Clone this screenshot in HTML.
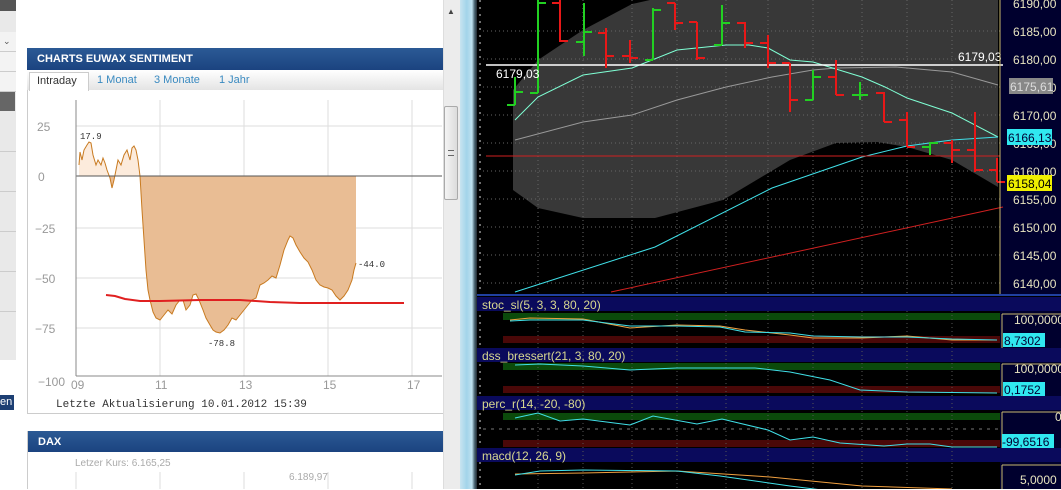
<!DOCTYPE html>
<html><head><meta charset="utf-8"><style>
*{margin:0;padding:0;box-sizing:border-box}
body{width:1061px;height:489px;overflow:hidden;position:relative;background:#fff;font-family:"Liberation Sans",sans-serif}
.a{position:absolute}
.mono{font-family:"Liberation Mono",monospace}
</style></head><body>
<!-- left sidebar -->
<div class="a" style="left:0;top:0;width:16px;height:360px;background:#e9e9e9"></div>
<div class="a" style="left:0;top:0;width:16px;height:11px;background:#555"></div>
<div class="a" style="left:0;top:32px;width:16px;height:20px;background:#f3f3f3;border-bottom:1px solid #ccc"></div>
<div class="a" style="left:0;top:52px;width:16px;height:20px;background:#f3f3f3;border-bottom:1px solid #ccc"></div>
<div class="a" style="left:0;top:72px;width:16px;height:20px;background:#f3f3f3;border-bottom:1px solid #ccc"></div>
<div class="a" style="left:0;top:92px;width:15px;height:19px;background:#666"></div>
<div class="a" style="left:0;top:132px;width:16px;height:20px;border-bottom:1px solid #ccc"></div>
<div class="a" style="left:0;top:172px;width:16px;height:20px;border-bottom:1px solid #ccc"></div>
<div class="a" style="left:0;top:212px;width:16px;height:20px;border-bottom:1px solid #ccc"></div>
<div class="a" style="left:0;top:252px;width:16px;height:20px;border-bottom:1px solid #ccc"></div>
<div class="a" style="left:0;top:292px;width:16px;height:20px;border-bottom:1px solid #ccc"></div>
<div class="a" style="left:0;top:360px;width:16px;height:130px;background:#fff"></div>
<div class="a" style="left:0;top:395px;width:14px;height:15px;background:#1d3f73;color:#fff;font-size:11px;line-height:15px">en</div>
<div class="a" style="left:3px;top:36px;font-size:9px;color:#555">⌄</div>

<!-- sentiment panel -->
<div class="a" style="left:27px;top:48px;width:416px;height:366px;border:1px solid #ccc;border-right:none"></div>
<div class="a" style="left:27px;top:48px;width:416px;height:22px;background:linear-gradient(#2b5a95,#1b4380);color:#fff;font-weight:bold;font-size:11px;line-height:23px;padding-left:10px">CHARTS EUWAX SENTIMENT</div>
<div class="a" style="left:27px;top:70px;width:416px;height:20px;background:linear-gradient(#fff,#e4e4e4)"></div>
<div class="a" style="left:29px;top:72px;width:60px;height:19px;background:#fff;border:1px solid #ccc;border-bottom:none;font-size:11px;line-height:17px;padding-left:7px;color:#333">Intraday</div>
<div class="a" style="left:97px;top:74px;font-size:11px;color:#3a8ac0">1 Monat</div>
<div class="a" style="left:154px;top:74px;font-size:11px;color:#3a8ac0">3 Monate</div>
<div class="a" style="left:219px;top:74px;font-size:11px;color:#3a8ac0">1 Jahr</div>

<svg class="a" style="left:0;top:0" width="443" height="489">
<defs>
<clipPath id="up"><rect x="0" y="0" width="443" height="176"/></clipPath>
<clipPath id="dn"><rect x="0" y="176" width="443" height="300"/></clipPath>
</defs>
<g stroke="#ddd" stroke-width="1">
<line x1="160" y1="100" x2="160" y2="376"/><line x1="244" y1="100" x2="244" y2="376"/><line x1="328" y1="100" x2="328" y2="376"/><line x1="412" y1="100" x2="412" y2="376"/>
<line x1="76" y1="126" x2="442" y2="126"/><line x1="76" y1="228" x2="442" y2="228"/><line x1="76" y1="278" x2="442" y2="278"/><line x1="76" y1="328" x2="442" y2="328"/>
</g>
<polygon clip-path="url(#up)" fill="#fcebdc" points="79,176 79,165 80,152 82,160 84,150 87,145 89,142 91,143 93,155 96,165 98,160 101,165 103,158 105,163 107,170 110,178 112,188 114,180 116,170 118,160 121,165 124,155 127,150 130,160 132,148 134,146 136,150 138,160 140,176"/>
<polygon clip-path="url(#dn)" fill="#e9bd94" points="79,176 79,165 80,152 82,160 84,150 87,145 89,142 91,143 93,155 96,165 98,160 101,165 103,158 105,163 107,170 110,178 112,188 114,180 116,170 118,160 121,165 124,155 127,150 130,160 132,148 134,146 136,150 138,160 140,176 142,210 144,240 146,270 148,290 150,300 153,312 156,318 160,320 164,315 168,310 172,314 176,305 180,300 183,300 186,310 190,305 193,295 196,294 199,300 203,310 206,318 210,325 213,330 216,332 220,333 224,330 228,325 232,318 236,320 240,315 244,310 248,305 252,300 256,298 260,285 264,283 268,280 272,276 276,278 280,265 284,250 288,240 290,236 293,238 296,245 300,252 304,258 308,262 312,270 316,280 320,285 324,287 328,288 332,290 336,296 340,300 344,296 348,290 352,280 354,270 356,263 356,176"/>
<polyline fill="none" stroke="#c87a20" stroke-width="1" points="79,165 80,152 82,160 84,150 87,145 89,142 91,143 93,155 96,165 98,160 101,165 103,158 105,163 107,170 110,178 112,188 114,180 116,170 118,160 121,165 124,155 127,150 130,160 132,148 134,146 136,150 138,160 140,176 142,210 144,240 146,270 148,290 150,300 153,312 156,318 160,320 164,315 168,310 172,314 176,305 180,300 183,300 186,310 190,305 193,295 196,294 199,300 203,310 206,318 210,325 213,330 216,332 220,333 224,330 228,325 232,318 236,320 240,315 244,310 248,305 252,300 256,298 260,285 264,283 268,280 272,276 276,278 280,265 284,250 288,240 290,236 293,238 296,245 300,252 304,258 308,262 312,270 316,280 320,285 324,287 328,288 332,290 336,296 340,300 344,296 348,290 352,280 354,270 356,263"/>
<line x1="76" y1="176" x2="442" y2="176" stroke="#555"/>
<line x1="76" y1="100" x2="76" y2="376" stroke="#888"/>
<line x1="76" y1="376" x2="442" y2="376" stroke="#888"/>
<polyline fill="none" stroke="#e02020" stroke-width="2" points="106,295 115,296 125,299 140,301 160,301 200,300 240,300 270,302 300,303 330,303 404,303"/>
<g font-family="Liberation Sans" font-size="12" fill="#999">
<text x="37" y="131">25</text><text x="38" y="181">0</text><text x="35" y="233">−25</text><text x="35" y="283">−50</text><text x="35" y="333">−75</text><text x="36" y="135" display="none"></text><text x="38" y="386">−100</text>
<text x="71" y="389">09</text><text x="155" y="389">11</text><text x="239" y="389">13</text><text x="323" y="389">15</text><text x="407" y="389">17</text>
</g>
<g font-family="Liberation Mono" font-size="9" fill="#333">
<text x="80" y="139">17.9</text><text x="208" y="346">-78.8</text><text x="358" y="267">-44.0</text>
</g>
<text x="56" y="407" font-family="Liberation Mono" font-size="11" fill="#333">Letzte Aktualisierung 10.01.2012 15:39</text>
<g stroke="#ddd"><line x1="76" y1="472" x2="76" y2="489"/><line x1="160" y1="472" x2="160" y2="489"/><line x1="244" y1="472" x2="244" y2="489"/><line x1="328" y1="472" x2="328" y2="489"/><line x1="412" y1="472" x2="412" y2="489"/></g>
</svg>
<div class="a" style="left:27px;top:431px;width:416px;height:58px;border-left:1px solid #ccc"></div>
<div class="a" style="left:28px;top:431px;width:415px;height:21px;background:linear-gradient(#2b5a95,#1b4380);color:#fff;font-weight:bold;font-size:11px;line-height:22px;padding-left:10px">DAX</div>
<div class="a" style="left:75px;top:458px;font-size:10px;color:#aaa">Letzer Kurs: 6.165,25</div>
<div class="a" style="left:289px;top:472px;font-size:10px;color:#aaa">6.189,97</div>

<!-- scrollbar -->
<div class="a" style="left:443px;top:0;width:17px;height:489px;background:#ececec;border-left:1px solid #ddd"></div>
<div class="a" style="left:447px;top:7px;font-size:8px;color:#444">▲</div>
<div class="a" style="left:444px;top:106px;width:14px;height:94px;background:linear-gradient(90deg,#f4f4f4,#dcdcdc);border:1px solid #aaa;border-radius:2px"></div>
<div class="a" style="left:448px;top:150px;width:6px;height:6px;border-top:1px solid #666;border-bottom:1px solid #666"></div>
<!-- frame -->
<div class="a" style="left:460px;top:0;width:17px;height:489px;background:linear-gradient(90deg,#c8e4f0,#a2d4ea 40%,#bfe1ef 70%,#4e6a78 85%,#202830)"></div>

<!-- trading chart -->
<svg class="a" style="left:477px;top:0" width="584" height="489" viewBox="477 0 584 489">
<rect x="477" y="0" width="584" height="489" fill="#000"/>
<rect x="1000" y="0" width="61" height="295" fill="#00002e"/>
<polygon fill="#383838" points="513,90 538,60 583,30 632,4 650,0 998,0 998,187 952,160 907,147 877,142 836,143 790,160 723,200 655,218 583,218 538,208 513,190"/>
<g stroke="#666" stroke-dasharray="1,3">
<line x1="538" y1="0" x2="538" y2="295"/><line x1="583" y1="0" x2="583" y2="295"/><line x1="632" y1="0" x2="632" y2="295"/><line x1="677" y1="0" x2="677" y2="295"/><line x1="726" y1="0" x2="726" y2="295"/><line x1="768" y1="0" x2="768" y2="295"/><line x1="813" y1="0" x2="813" y2="295"/><line x1="862" y1="0" x2="862" y2="295"/><line x1="907" y1="0" x2="907" y2="295"/><line x1="952" y1="0" x2="952" y2="295"/>
<line x1="483" y1="31" x2="1000" y2="31"/><line x1="483" y1="59" x2="1000" y2="59"/><line x1="483" y1="87" x2="1000" y2="87"/><line x1="483" y1="115" x2="1000" y2="115"/><line x1="483" y1="143" x2="1000" y2="143"/><line x1="483" y1="171" x2="1000" y2="171"/><line x1="483" y1="199" x2="1000" y2="199"/><line x1="483" y1="227" x2="1000" y2="227"/><line x1="483" y1="255" x2="1000" y2="255"/><line x1="483" y1="283" x2="1000" y2="283"/>
</g>
<line x1="480" y1="0" x2="480" y2="489" stroke="#ddd" stroke-dasharray="2,5"/>
<polyline fill="none" stroke="#999" points="515,140 583,122 632,115 677,100 726,87 772,77 813,70 836,68 896,67 952,72 998,85"/>
<polyline fill="none" stroke="#7fffd4" points="515,120 538,97 583,75 632,68 677,50 726,45 749,45 768,48 790,60 813,62 862,77 885,87 907,98 952,113 998,137"/>
<polyline fill="none" stroke="#40e0e8" points="515,292 655,247 772,188 862,157 907,146 952,140 998,137"/>
<line x1="611" y1="292" x2="1003" y2="207" stroke="#d02020"/>
<line x1="486" y1="156" x2="1000" y2="156" stroke="#d02020"/>
<line x1="486" y1="65" x2="1003" y2="65" stroke="#fff" stroke-width="1.5"/>
<g stroke-width="2" fill="none">
<g stroke="#22d022">
<path d="M515 77V105M507 105H515M515 92H523"/>
<path d="M538 0V93M530 93H538M538 3H546"/>
<path d="M584 3V56M576 42H584M584 32H592"/>
<path d="M653 8V60M645 60H653M653 10H661"/>
<path d="M722 5V45M714 45H722M722 23H730"/>
<path d="M813 70V100M805 100H813M813 77H821"/>
<path d="M860 82V100M852 95H868"/>
<path d="M930 142V155M922 147H930M930 143H938"/>
</g>
<g stroke="#e81818">
<path d="M560 0V42M552 3H560M560 41H568"/>
<path d="M606 28V68M598 33H606M606 56H614"/>
<path d="M630 40V63M622 56H630M630 58H638"/>
<path d="M675 3V30M667 3H675M675 23H683"/>
<path d="M697 22V60M689 22H697M697 58H705"/>
<path d="M745 22V48M737 23H745M745 43H753"/>
<path d="M768 35V68M760 43H768M768 63H776"/>
<path d="M790 63V112M782 63H790M790 100H798"/>
<path d="M836 60V95M828 77H836M836 95H844"/>
<path d="M884 92V122M876 93H884M884 122H892"/>
<path d="M907 112V147M899 120H907M907 147H915"/>
<path d="M952 140V163M944 143H952M952 150H960"/>
<path d="M975 112V172M967 150H975M975 170H983"/>
<path d="M997 158V182M989 170H997M997 182H1005"/>
</g>
</g>
<g font-family="Liberation Sans" font-size="12" fill="#fff">
<text x="496" y="78">6179,03</text><text x="958" y="61">6179,03</text>
</g>
<line x1="1000" y1="0" x2="1000" y2="295" stroke="#c8b870"/>
<g font-family="Liberation Sans" font-size="12" fill="#e8e4c0">
<text x="1013" y="8">6190,00</text><text x="1013" y="36">6185,00</text><text x="1013" y="64">6180,00</text><text x="1013" y="92">6175,00</text><text x="1013" y="120">6170,00</text><text x="1013" y="148">6165,00</text><text x="1013" y="176">6160,00</text><text x="1013" y="204">6155,00</text><text x="1013" y="232">6150,00</text><text x="1013" y="260">6145,00</text><text x="1013" y="288">6140,00</text>
</g>
<rect x="1009" y="78" width="44" height="16" fill="#888"/><text x="1010" y="91" font-family="Liberation Sans" font-size="12" fill="#ddd">6175,61</text>
<rect x="1007" y="129" width="45" height="16" fill="#30e8f0"/><text x="1008" y="142" font-family="Liberation Sans" font-size="12" fill="#003">6166,13</text>
<rect x="1007" y="175" width="45" height="16" fill="#f0f000"/><text x="1008" y="188" font-family="Liberation Sans" font-size="12" fill="#000">6158,04</text>
<line x1="477" y1="295" x2="1061" y2="295" stroke="#2040a0" stroke-width="2"/>

<!-- indicator panels -->
<g>
<rect x="477" y="297" width="584" height="14" fill="#0a0a5c"/>
<rect x="477" y="348" width="584" height="14" fill="#0a0a5c"/>
<rect x="477" y="396" width="584" height="14" fill="#0a0a5c"/>
<rect x="477" y="448" width="584" height="14" fill="#0a0a5c"/>
<rect x="1000" y="311" width="61" height="37" fill="#00002e"/>
<rect x="1000" y="362" width="61" height="34" fill="#00002e"/>
<rect x="1000" y="410" width="61" height="38" fill="#00002e"/>
<rect x="1000" y="462" width="61" height="27" fill="#00002e"/>
<rect x="503" y="313" width="497" height="7" fill="#0b4a0b"/><rect x="503" y="336" width="497" height="7" fill="#4a0808"/>
<rect x="503" y="363" width="497" height="7" fill="#0b4a0b"/><rect x="503" y="386" width="497" height="7" fill="#4a0808"/>
<rect x="503" y="413" width="497" height="7" fill="#0b4a0b"/><rect x="503" y="440" width="497" height="7" fill="#4a0808"/>
<line x1="483" y1="429" x2="1000" y2="429" stroke="#777" stroke-dasharray="3,5"/>
<g stroke="#555" stroke-dasharray="1,3">
<line x1="538" y1="311" x2="538" y2="489"/><line x1="583" y1="311" x2="583" y2="489"/><line x1="632" y1="311" x2="632" y2="489"/><line x1="677" y1="311" x2="677" y2="489"/><line x1="726" y1="311" x2="726" y2="489"/><line x1="768" y1="311" x2="768" y2="489"/><line x1="813" y1="311" x2="813" y2="489"/><line x1="862" y1="311" x2="862" y2="489"/><line x1="907" y1="311" x2="907" y2="489"/><line x1="952" y1="311" x2="952" y2="489"/>
</g>
<g font-family="Liberation Sans" font-size="12" fill="#d8d890">
<text x="482" y="309">stoc_sl(5, 3, 3, 80, 20)</text>
<text x="482" y="360">dss_bressert(21, 3, 80, 20)</text>
<text x="482" y="408">perc_r(14, -20, -80)</text>
<text x="482" y="460">macd(12, 26, 9)</text>
</g>
<polyline fill="none" stroke="#f0a040" points="510,320 530,318 583,319 630,328 677,325 720,326 745,330 790,335 813,338 862,338 907,336 952,340 997,340"/>
<polyline fill="none" stroke="#40e0e8" points="510,321 530,320 583,320 630,326 677,326 720,327 745,332 790,333 813,336 862,337 907,337 952,339 997,340"/>
<polyline fill="none" stroke="#40e0e8" points="515,365 540,364 583,366 630,370 677,368 755,368 790,372 830,380 860,390 907,392 997,393"/>
<polyline fill="none" stroke="#40e0e8" points="515,418 538,413 560,421 583,419 630,425 653,416 697,424 722,419 768,430 790,440 813,437 840,443 884,446 907,444 930,444 952,447 997,447"/>
<polyline fill="none" stroke="#f0a040" points="515,474 583,473 677,471 770,477 862,486 952,489"/>
<polyline fill="none" stroke="#40e0e8" points="515,475 540,471 583,470 677,471 720,476 790,486 862,495"/>
<g fill="none" stroke="#c8b870">
<path d="M1002 314H1061M1002 314V348"/><path d="M1002 364H1061M1002 364V396"/><path d="M1002 412H1061M1002 412V448"/><path d="M1002 465H1061M1002 465V489"/>
</g>
<g font-family="Liberation Sans" font-size="12" fill="#e8e4c0">
<text x="1014" y="324">100,0000</text><text x="1014" y="373">100,0000</text><text x="1055" y="421">0</text><text x="1020" y="484">5,0000</text>
</g>
<rect x="1003" y="333" width="42" height="14" fill="#30e8f0"/><text x="1004" y="345" font-family="Liberation Sans" font-size="12" fill="#003">8,7302</text>
<rect x="1003" y="382" width="42" height="14" fill="#30e8f0"/><text x="1004" y="394" font-family="Liberation Sans" font-size="12" fill="#003">0,1752</text>
<rect x="1002" y="434" width="52" height="14" fill="#30e8f0"/><text x="1002" y="446" font-family="Liberation Sans" font-size="12" fill="#003">-99,6516</text>
</g>
</svg>
</body></html>
